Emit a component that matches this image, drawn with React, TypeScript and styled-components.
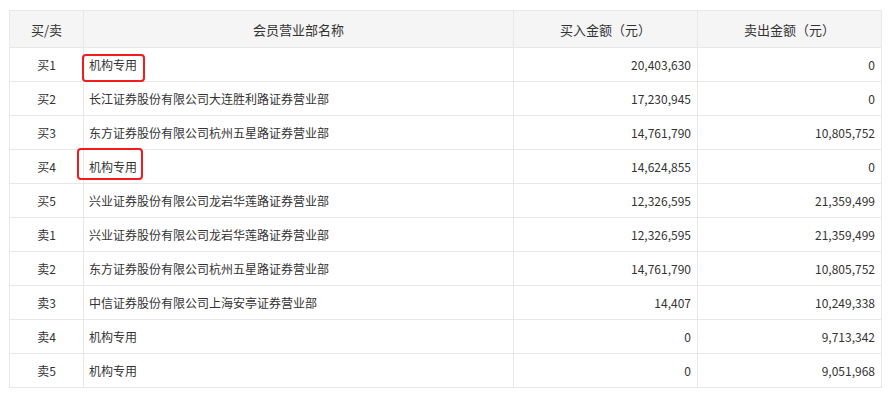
import styled, { createGlobalStyle } from "styled-components";

type Seat = {
  side: string;
  name: string;
  buy: string;
  sell: string;
  mark?: { left: number; top: number; width: number; height: number };
};

const seats: Seat[] = [
  { side: "买1", name: "机构专用", buy: "20,403,630", sell: "0", mark: { left: 0, top: 6, width: 63, height: 28 } },
  { side: "买2", name: "长江证券股份有限公司大连胜利路证券营业部", buy: "17,230,945", sell: "0" },
  { side: "买3", name: "东方证券股份有限公司杭州五星路证券营业部", buy: "14,761,790", sell: "10,805,752" },
  { side: "买4", name: "机构专用", buy: "14,624,855", sell: "0", mark: { left: -5, top: -2, width: 66, height: 32 } },
  { side: "买5", name: "兴业证券股份有限公司龙岩华莲路证券营业部", buy: "12,326,595", sell: "21,359,499" },
  { side: "卖1", name: "兴业证券股份有限公司龙岩华莲路证券营业部", buy: "12,326,595", sell: "21,359,499" },
  { side: "卖2", name: "东方证券股份有限公司杭州五星路证券营业部", buy: "14,761,790", sell: "10,805,752" },
  { side: "卖3", name: "中信证券股份有限公司上海安亭证券营业部", buy: "14,407", sell: "10,249,338" },
  { side: "卖4", name: "机构专用", buy: "0", sell: "9,713,342" },
  { side: "卖5", name: "机构专用", buy: "0", sell: "9,051,968" },
];

const GlobalStyle = createGlobalStyle`
  body {
    margin: 0;
    background: #fff;
    font-family: "Noto Sans CJK SC", "Noto Sans", sans-serif;
    color: #333;
  }
`;

const Page = styled.div`
  padding: 10px 10px 0 9px;
`;

const Table = styled.table`
  width: 868px;
  border-collapse: collapse;
  table-layout: fixed;
`;

const HeadCell = styled.th<{ $w: number }>`
  width: ${(p) => p.$w}px;
  height: 36px;
  padding: 0;
  background: #f5f5f5;
  border: 1px solid #e8e8e8;
  font-size: 13px;
  font-weight: normal;
  color: #333;
  text-align: center;
`;

const Cell = styled.td<{ $align: "left" | "center" | "right" }>`
  height: 33px;
  padding: 0 6px;
  border: 1px solid #e8e8e8;
  font-size: 12px;
  color: #333;
  text-align: ${(p) => p.$align};
  white-space: nowrap;
`;

const NameWrap = styled.span`
  position: relative;
  display: inline-block;
  margin-left: -1px;
`;

const Mark = styled.span`
  position: absolute;
  border: 2px solid #f31c1c;
  border-radius: 4px;
  box-sizing: border-box;
  pointer-events: none;
`;

export default function App() {
  return (
    <Page>
      <GlobalStyle />
      <Table>
        <thead>
          <tr>
            <HeadCell $w={73}>买/卖</HeadCell>
            <HeadCell $w={429}>会员营业部名称</HeadCell>
            <HeadCell $w={183}>买入金额（元）</HeadCell>
            <HeadCell $w={183}>卖出金额（元）</HeadCell>
          </tr>
        </thead>
        <tbody>
          {seats.map((s, i) => (
            <tr key={i}>
              <Cell $align="center">{s.side}</Cell>
              <Cell $align="left">
                <NameWrap>
                  {s.name}
                  {s.mark && (
                    <Mark
                      style={{
                        left: s.mark.left - 7,
                        top: s.mark.top - 8,
                        width: s.mark.width,
                        height: s.mark.height,
                      }}
                    />
                  )}
                </NameWrap>
              </Cell>
              <Cell $align="right">{s.buy}</Cell>
              <Cell $align="right">{s.sell}</Cell>
            </tr>
          ))}
        </tbody>
      </Table>
    </Page>
  );
}
